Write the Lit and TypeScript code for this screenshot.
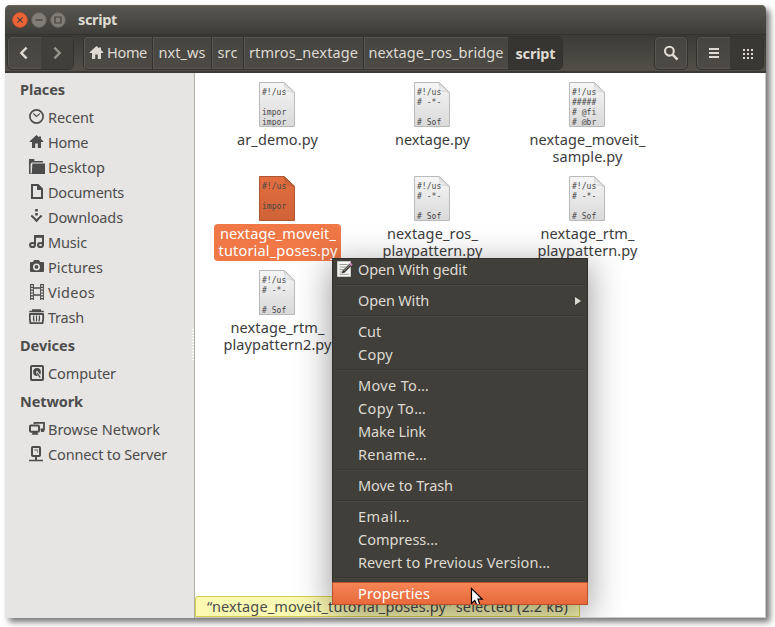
import { LitElement, html, svg, css, nothing } from "lit";
import { customElement, property } from "lit/decorators.js";
import { classMap } from "lit/directives/class-map.js";
import { styleMap } from "lit/directives/style-map.js";

const FAMILY = '"Noto Sans", "Open Sans", sans-serif';
const SIZE = 14.5;
const ctx = document.createElement("canvas").getContext("2d")!;

/** Letter spacing that sets a text to the given width. */
function tracking(text: string, width: number, bold: boolean): string {
  ctx.font = `${bold ? "bold " : ""}${SIZE}px ${FAMILY}`;
  return `${((width - ctx.measureText(text).width) / text.length).toFixed(3)}px`;
}

const label = (text: string, width: number, bold = false) => html`<span
  class=${classMap({ label: true, bold })}
  style=${styleMap({ letterSpacing: tracking(text, width, bold) })}>${text}</span>`;

const labelStyles = css`
  .label { white-space: pre; font-weight: 400; }
  .bold { font-weight: 700; }
`;

const icons: Record<string, unknown> = {
  recent: svg`<circle cx="7.5" cy="7.5" r="6.6" fill="none" stroke="currentColor" stroke-width="1.7"/><path d="M4.4 4.5 7.4 7.4 11 4.6" fill="none" stroke="currentColor" stroke-width="1.2"/>`,
  home: svg`<path d="M7.5 1 .7 7.2V8H3v6h3.2V9.5h2.6V14H12V8h2.3v-.8L12 5V2.5h-2v.8z"/>`,
  desktop: svg`<path d="M0 0h5.3v2H14v1.5H2.6L1.6 5v10H0z"/><path d="M3.4 4.6H16V15H1.8l1-1z"/>`,
  documents: svg`<path fill-rule="evenodd" d="M2 0h7.4L14 4.6V15H2zM4 2v11h8V6H8V2z"/>`,
  downloads: svg`<path d="M6.2 0h2.6v2.4H6.2zM6.2 4h2.6v2.4H6.2z"/><path d="m2.3 6.6 5.2 4.8 5.2-4.8" fill="none" stroke="currentColor" stroke-width="2"/><path d="M5 10.5h5l-2.5 2.7z"/>`,
  music: svg`<path d="M6 11V2h8v8.5" fill="none" stroke="currentColor" stroke-width="2"/><path d="M5 1h10v2.8H5z"/><ellipse cx="3.5" cy="11" rx="2.5" ry="2.1" fill="none" stroke="currentColor" stroke-width="2"/><ellipse cx="11.5" cy="11" rx="2.5" ry="2.1" fill="none" stroke="currentColor" stroke-width="2"/>`,
  pictures: svg`<path fill-rule="evenodd" d="M5 1h5l1 2h3q1 0 1 1v8q0 1-1 1H2q-1 0-1-1V4q0-1 1-1h2zM7.5 4.4a3.5 3.5 0 1 0 0 7 3.5 3.5 0 0 0 0-7z"/><circle cx="7.5" cy="7.9" r="1.9"/>`,
  videos: svg`<path d="M1.6 0v16M4.4 0v16M11.6 0v16M14.4 0v16" stroke="currentColor" stroke-width="1"/><path d="M3 0v16M13 0v16" stroke="currentColor" stroke-width="2.4" stroke-dasharray="1.2 1.6"/><path d="M4.5 4h7M4.5 11h7" stroke="currentColor" stroke-width="1.3"/>`,
  trash: svg`<path d="M3 .2h9v1.6h2.7v1.4H.3V1.8H3z"/><path d="M1 5h13q.7 4-.5 9.2h-12Q.3 9 1 5z" fill="none" stroke="currentColor" stroke-width="1.8"/><path d="M4.7 6.5q-.6 3 .4 6M7.5 6.5v6M10.3 6.5q.6 3-.4 6" fill="none" stroke="currentColor" stroke-width="1.2"/>`,
  computer: svg`<rect x="2" y="1" width="12" height="14" rx="1" fill="none" stroke="currentColor" stroke-width="2"/><circle cx="8" cy="7" r="3.9"/><circle cx="8" cy="7" r="1" fill="var(--paper)"/><path d="m8.2 7.6 3.6 5.4" stroke="var(--paper)" stroke-width="2.6"/><path d="m8.2 8 3 4.6" stroke="currentColor" stroke-width="1.3"/>`,
  network: svg`<path d="M5.5 3V1.8H15v6.7h-3.5" fill="none" stroke="currentColor" stroke-width="1.8"/><path d="M12 9h3v2h-3z"/><rect x="1" y="4.5" width="9" height="6.2" rx="1" fill="none" stroke="currentColor" stroke-width="2"/><path d="M4 11h4l1.5 2.8h-7z"/>`,
  server: svg`<rect x="3" y="1" width="8" height="9" rx=".8" fill="none" stroke="currentColor" stroke-width="2"/><path d="M5.4 3.4h3.6v1.1H5.4zM8 5.4h1.2v1.1H8zM6 10h2v4H6zM0 13.7h14v1.6H0z"/>`,
  back: svg`<path d="m10.6 2.6-5.3 5.4 5.3 5.4" fill="none" stroke="currentColor" stroke-width="2.4"/>`,
  forward: svg`<path d="m5.4 2.6 5.3 5.4-5.3 5.4" fill="none" stroke="currentColor" stroke-width="2.4"/>`,
  search: svg`<circle cx="6.4" cy="6.2" r="4.4" fill="none" stroke="currentColor" stroke-width="2.1"/><path d="m9.6 9.6 5 5" stroke="currentColor" stroke-width="2.6"/>`,
  list: svg`<path d="M3 3h10v2H3zM3 7h10v2H3zM3 11h10v2H3z"/>`,
  grid: svg`<path d="M4 4h2v2H4zM8 4h2v2H8zM12 4h2v2h-2zM4 8h2v2H4zM8 8h2v2H8zM12 8h2v2h-2zM4 12h2v2H4zM8 12h2v2H8zM12 12h2v2h-2z"/>`,
  gedit: svg`<path d="M.5.5h13v15H.5z" fill="#f4f4f2" stroke="#c9c9c5"/><path d="M2.5 3.5h8M2.5 6h6M2.5 8.5h4M2.5 11h5M2.5 13.3h9" stroke="#9b9b98"/><path d="m4.6 12.6 1.2-3.4 6.5-6.4 2 2.1-6.5 6.5z" fill="#3c3b37"/><path d="m6.8 9.9 6-6" stroke="#a5a29a"/><path d="m12.3 2.8 1.2-1.2 2.1 2-1.3 1.3z" fill="#cf7fc0"/>`,
};
const icon = (name: string) => html`<svg class="icon" viewBox="0 0 16 16" fill="currentColor">${icons[name]}</svg>`;

@customElement("file-item")
class FileItem extends LitElement {
  @property({ attribute: false }) lines: [string, number][] = [];
  @property({ attribute: false }) preview: string[] = [];
  @property({ type: Boolean }) selected = false;

  static styles = [labelStyles, css`
    :host { display: flex; flex-direction: column; align-items: center; height: 94px; color: #3c3c3c; }
    .thumb { display: block; width: 36px; height: 46px; margin: 0 2px 2px 0; flex: none; }
    .code { font: 8.3px "DejaVu Sans Mono", monospace; fill: #484848; }
    .names { display: flex; flex-direction: column; align-items: center; padding: 1px 4px 2px 4px; line-height: 17px; border-radius: 4px; }
    .chosen { background: #f07746; color: #fff; padding: 1px 3px 2px 4px; }
  `];

  render() {
    const s = this.selected;
    return html`
      <svg class="thumb" viewBox="0 0 36 46">
        <defs>
          <linearGradient id="page" x2="0" y2="1">
            <stop offset="0" stop-color=${s ? "#e26e40" : "#f6f6f6"} />
            <stop offset="1" stop-color=${s ? "#cf6338" : "#d9d9d9"} />
          </linearGradient>
          <linearGradient id="fold" x1="0" y1="1" x2=".7" y2=".2">
            <stop offset="0" stop-color=${s ? "#e8753f" : "#ffffff"} />
            <stop offset="1" stop-color=${s ? "#b2552f" : "#d0d0d0"} />
          </linearGradient>
          <clipPath id="inside"><path d="M1 1h34v42.6H1z" /></clipPath>
        </defs>
        <path d="M.5.5h24.8l10.2 9.8v34.2H.5z" fill="url(#page)" stroke=${s ? "#ae5631" : "#b9b9b9"} />
        <path d="M24.8.8q2.4 4.5.6 8.4 5-1 9.8 1.4z" fill="url(#fold)" stroke=${s ? "#ae5631" : "#c4c4c4"} stroke-width=".6" />
        <g clip-path="url(#inside)">
          ${this.preview.map((t, i) => svg`<text class="code" x="3" y=${13 + i * 10} textLength=${t.length * 4.85} lengthAdjust="spacingAndGlyphs">${t}</text>`)}
        </g>
      </svg>
      <div class=${classMap({ names: true, chosen: s })}>
        ${this.lines.map(([t, w]) => label(t, w))}
      </div>`;
  }
}

const OF = ["#!/us", "# -*-", "", "# Sof"];
const files = [
  { lines: [["ar_demo.py", 81]], preview: ["#!/us", "", "impor", "impor"] },
  { lines: [["nextage.py", 75]], preview: OF },
  { lines: [["nextage_moveit_", 116], ["sample.py", 70]], preview: ["#!/us", "#####", "# @fi", "# @br"] },
  { lines: [["nextage_moveit_", 116], ["tutorial_poses.py", 119]], preview: ["#!/us", "", "impor"], selected: true },
  { lines: [["nextage_ros_", 91], ["playpattern.py", 100]], preview: OF },
  { lines: [["nextage_rtm_", 94], ["playpattern.py", 100]], preview: OF },
  { lines: [["nextage_rtm_", 94], ["playpattern2.py", 108]], preview: OF },
] as { lines: [string, number][]; preview: string[]; selected?: boolean }[];

const places: { head: [string, number]; rows: [string, string, number][] }[] = [
  { head: ["Places", 45], rows: [
    ["recent", "Recent", 46], ["home", "Home", 40], ["desktop", "Desktop", 57],
    ["documents", "Documents", 76], ["downloads", "Downloads", 75], ["music", "Music", 39],
    ["pictures", "Pictures", 55], ["videos", "Videos", 47], ["trash", "Trash", 36]] },
  { head: ["Devices", 55], rows: [["computer", "Computer", 68]] },
  { head: ["Network", 63], rows: [["network", "Browse Network", 112], ["server", "Connect to Server", 119]] },
];

type Entry = { text: string; width: number; icon?: string; submenu?: boolean; active?: boolean };
const menu: (Entry | null)[] = [
  { text: "Open With gedit", width: 109, icon: "gedit" }, null,
  { text: "Open With", width: 71, submenu: true }, null,
  { text: "Cut", width: 23 }, { text: "Copy", width: 35 }, null,
  { text: "Move To…", width: 71 }, { text: "Copy To…", width: 68 },
  { text: "Make Link", width: 68 }, { text: "Rename…", width: 69 }, null,
  { text: "Move to Trash", width: 95 }, null,
  { text: "Email…", width: 52 }, { text: "Compress...", width: 80 },
  { text: "Revert to Previous Version…", width: 192 }, null,
  { text: "Properties", width: 72, active: true },
];

@customElement("context-menu")
class ContextMenu extends LitElement {
  static styles = [labelStyles, css`
    :host { display: block; width: 256px; box-sizing: border-box; color: #dfdbd2; background: #403f3a;
      border: 1px solid #2f2e2a; border-width: 0 1px; box-shadow: inset 0 1px #2f2e2a, 0 8px 32px 2px rgba(0, 0, 0, .38); }
    .item { display: flex; align-items: center; height: 23px; padding: 0 6px 0 4px; line-height: 23px; }
    .slot { width: 21px; height: 17px; flex: none; display: flex; }
    .icon { width: 16px; height: 16px; }
    .arrow { width: 6px; height: 8px; margin-left: auto; fill: #dfdbd2; }
    .sep { height: 8px; padding: 3px 4px 0; box-sizing: border-box; }
    .line { height: 1px; background: #373632; border-bottom: 1px solid #484741; }
    .active { margin: 0 -1px; padding-left: 5px; color: #fff; background: linear-gradient(#f78657, #e6683a);
      box-shadow: inset 0 0 0 1px #b95029; }
  `];
  render() {
    return html`${menu.map((m) => m
      ? html`<div class=${classMap({ item: true, active: !!m.active })}>
          <span class="slot">${m.icon ? icon(m.icon) : nothing}</span>${label(m.text, m.width)}
          ${m.submenu ? html`<svg class="arrow" viewBox="0 0 6 8"><path d="M0 0 6 4 0 8z" /></svg>` : nothing}
        </div>`
      : html`<div class="sep"><div class="line"></div></div>`)}`;
  }
}

const crumbs: [string, number, number][] = [
  ["Home", 40, 69], ["nxt_ws", 47, 59], ["src", 20, 32], ["rtmros_nextage", 109, 120], ["nextage_ros_bridge", 135, 145], ["script", 40, 53],
];

@customElement("app-root")
class AppRoot extends LitElement {
  static styles = [labelStyles, css`
    :host { display: block; position: relative; box-sizing: border-box; width: 775px; height: 627px; padding: 5px 0 0 5px;
      overflow: hidden; background: #fff; font: 14.5px/25px "Noto Sans", "Open Sans", sans-serif; }
    .window { display: flex; flex-direction: column; width: 761px; height: 613px; box-sizing: border-box; background: #fff;
      border-radius: 5px 5px 0 0; box-shadow: 4px 4px 6px rgba(0, 0, 0, .55); }
    .icon { width: 16px; height: 16px; display: block; flex: none; }
    .title { display: flex; align-items: center; height: 29px; padding: 0 7px; gap: 3px; box-sizing: border-box; color: #dfdbd2;
      background: linear-gradient(#595750, #3e3d39); border-radius: 5px 5px 0 0; box-shadow: inset 0 1px #69665e; flex: none; }
    .ctl { width: 16px; height: 16px; display: block; }
    .title .label { margin-left: 9px; }
    .tools { display: flex; align-items: flex-start; height: 39px; box-sizing: border-box; padding: 1px 2px 0; flex: none;
      color: #dfdbd2; background: linear-gradient(#3c3b37, #514f47); border-top: 1px solid #33322e; border-bottom: 2px solid #3b3a35; }
    .group { display: flex; height: 34px; box-sizing: border-box; border: 1px solid #34332f; border-radius: 5px; overflow: hidden;
      background: linear-gradient(#454440, #4d4b44); box-shadow: inset 0 0 0 1px #57554e; }
    .btn { display: flex; align-items: center; justify-content: center; flex: 1; }
    .down { background: #393834; }
    .dim { color: #96938b; background: #403f3a; }
    .nav { width: 67px; margin-right: 9px; }
    .path { margin-right: auto; }
    .crumb { display: flex; align-items: center; justify-content: center; gap: 2px; box-sizing: border-box; padding-bottom: 1px; border-right: 1px solid #34332f; box-shadow: inset 1px 1px #59574f; }
    .crumb:last-child { border-right: 0; background: #363531; box-shadow: none; padding-bottom: 0; }
    .find { width: 34px; margin-right: 8px; }
    .views { width: 68px; }
    .body { display: flex; flex: 1; min-height: 0; }
    .side { --paper: #e6e5e3; width: 190px; box-sizing: border-box; background: #e6e5e3; border-right: 1px solid #b3b0a9; color: #4c4c4c; padding-top: 1px; flex: none;
      display: flex; }
    .list { flex: 1; }
    .head { height: 31px; line-height: 31px; padding-left: 15px; }
    .row { display: flex; align-items: center; height: 25px; padding-left: 24px; gap: 3px; }
    .row .icon { margin-bottom: 1px; }
    .grip { width: 2px; height: 33px; margin-top: 255px; background: repeating-linear-gradient(#fff 0 1px, #e6e5e3 1px 3px); }
    .main { position: relative; flex: 1; min-width: 0; border-right: 1px solid #c9c8c5; border-bottom: 1px solid #c9c8c5; overflow: hidden; }
    .files { display: grid; grid-template-columns: repeat(3, 155px); padding: 9px 0 0 5px; }
    .status { position: absolute; left: 0; bottom: 0; width: 385px; height: 21px; box-sizing: border-box; padding-left: 11px; line-height: 18px;
      background: #fbf9b2; border: 1px solid #d3d04b; border-radius: 3px 0 0 0; color: #4c4c4c; }
    .popup { position: absolute; left: 137px; top: 185px; }
    .pointer { position: absolute; left: 275px; top: 514px; width: 14px; height: 17px; }
  `];

  control(fill: string, edge: string, mark: unknown) {
    return html`<svg class="ctl" viewBox="0 0 16 16"><circle cx="8" cy="8" r="7.4" fill=${fill} stroke=${edge} />
      <g fill="none" stroke="#44423c" stroke-width="1.2">${mark}</g></svg>`;
  }

  render() {
    return html`<div class="window">
      <div class="title">
        ${this.control("#ee6437", "#b9522f", svg`<path d="m5.3 5.3 5.4 5.4M10.7 5.3l-5.4 5.4"/>`)}
        ${this.control("#807e77", "#65635c", svg`<path d="M4.5 8h7"/>`)}
        ${this.control("#807e77", "#65635c", svg`<path d="M5 5h6v6H5z"/>`)}
        ${label("script", 39, true)}
      </div>
      <div class="tools">
        <div class="group nav"><span class="btn">${icon("back")}</span><span class="btn dim">${icon("forward")}</span></div>
        <div class="group path">
          ${crumbs.map(([t, w, box], i) => html`<span class="crumb" style=${styleMap({ width: `${box}px` })}>
            ${i === 0 ? icon("home") : nothing}${label(t, w, i === 5)}</span>`)}
        </div>
        <div class="group find"><span class="btn">${icon("search")}</span></div>
        <div class="group views"><span class="btn">${icon("list")}</span><span class="btn down">${icon("grid")}</span></div>
      </div>
      <div class="body">
        <div class="side">
          <div class="list">
            ${places.map((g) => html`<div class="head">${label(g.head[0], g.head[1], true)}</div>
              ${g.rows.map(([ic, t, w]) => html`<div class="row">${icon(ic)}${label(t, w)}</div>`)}`)}
          </div>
          <div class="grip"></div>
        </div>
        <div class="main">
          <div class="files">
            ${files.map((f) => html`<file-item .lines=${f.lines} .preview=${f.preview} ?selected=${!!f.selected}></file-item>`)}
          </div>
          <div class="status">${label("“nextage_moveit_tutorial_poses.py” selected (2.2 kB)", 361)}</div>
          <context-menu class="popup"></context-menu>
          <svg class="pointer" viewBox="0 0 14 17"><path d="M1.5 1.5v15l3.2-3 2.2 4.5h3L8 12.2h4.2z" fill="#fff" stroke="#000" stroke-width="1.2" /></svg>
        </div>
      </div>
    </div>`;
  }
}
